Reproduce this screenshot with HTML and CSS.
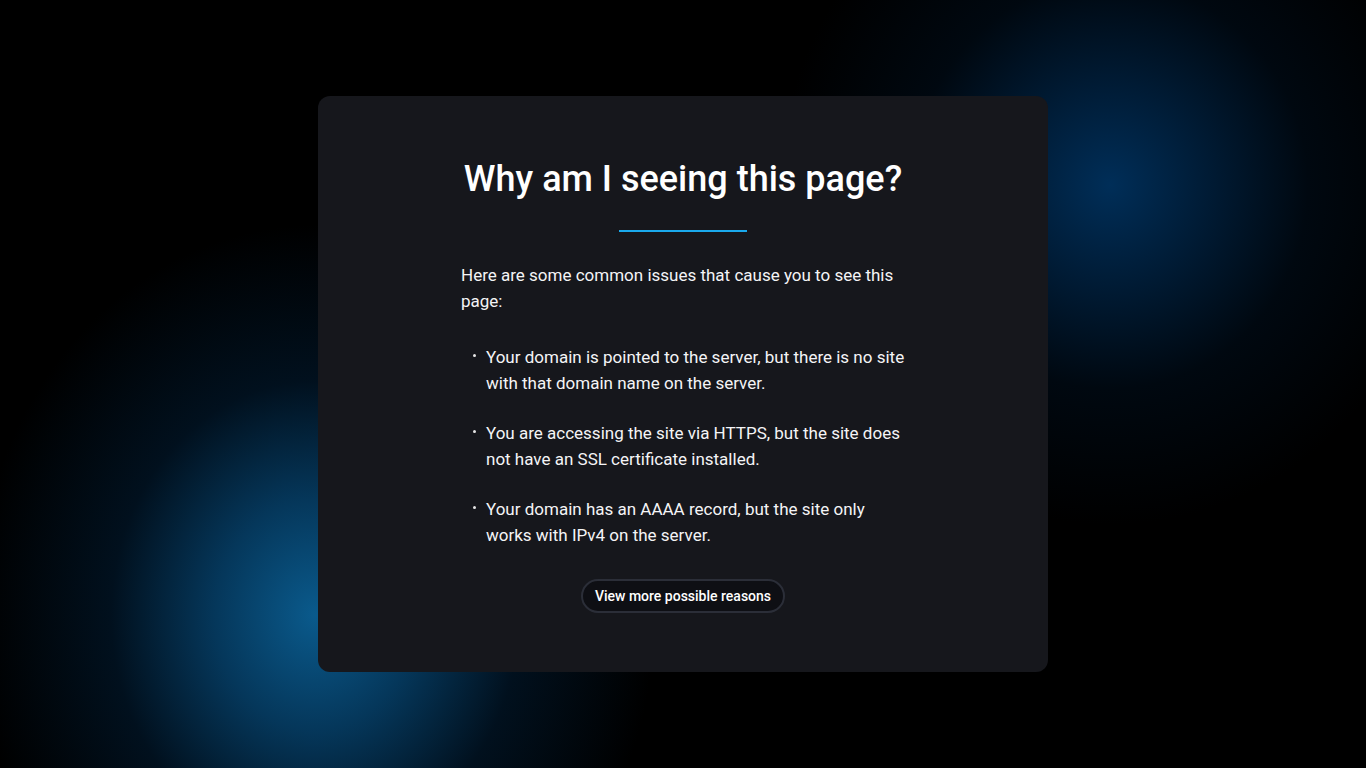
FILE: index.html
```html
<!DOCTYPE html>
<html lang="en">
<head>
<meta charset="utf-8">
<title>Why am I seeing this page?</title>
<link rel="stylesheet" href="styles.css">
</head>
<body>
<main class="stage">
  <section class="card">
    <h1 class="title">Why am I seeing this page?</h1>
    <div class="divider"></div>
    <div class="content">
      <p class="intro">Here are some common issues that cause you to see this page:</p>
      <ul class="reasons">
        <li>Your domain is pointed to the server, but there is no site with that domain name on the server.</li>
        <li>You are accessing the site via HTTPS, but the site does not have an SSL certificate installed.</li>
        <li>Your domain has an AAAA record, but the site only works with IPv4 on the server.</li>
      </ul>
    </div>
    <a class="more" href="#">View more possible reasons</a>
  </section>
</main>
</body>
</html>
```

FILE: styles.css
```css
* { box-sizing: border-box; }
html, body { margin: 0; height: 100%; }
body {
  background-color: #000;
  background-image:
    radial-gradient(ellipse 330px 340px at 1110px 185px, rgba(0, 46, 88, 1) 0%, rgba(0, 36, 70, 0.75) 30%, rgba(0, 20, 40, 0.4) 60%, rgba(0, 0, 0, 0) 100%),
    radial-gradient(ellipse 340px 390px at 315px 615px, rgba(10, 90, 140, 1) 0%, rgba(6, 68, 112, 0.8) 30%, rgba(2, 36, 66, 0.45) 60%, rgba(0, 0, 0, 0) 100%);
  font-family: Roboto, "Liberation Sans", sans-serif;
  color: #fff;
  overflow: hidden;
}
.stage {
  height: 768px;
  display: flex;
  justify-content: center;
  padding-top: 96px;
}
.card {
  width: 730px;
  height: 576px;
  background: #16171c;
  border-radius: 12px;
  padding: 59px 143px 0;
  display: flex;
  flex-direction: column;
  align-items: center;
}
.title {
  margin: 0;
  font-size: 36px;
  font-weight: 500;
  line-height: 48px;
}
.divider {
  width: 128px;
  height: 2px;
  background: #1aa9ec;
  margin-top: 27px;
}
.content {
  width: 444px;
  margin-top: 30px;
  font-size: 17px;
  line-height: 26px;
  color: #f4f4f6;
}
.intro { margin: 0; }
.reasons {
  margin: 30px 0 0;
  padding: 0 0 0 25px;
  list-style: none;
}
.reasons li {
  position: relative;
  margin-bottom: 24px;
}
.reasons li:last-child { margin-bottom: 0; }
.reasons li::before {
  content: "";
  position: absolute;
  left: -13px;
  top: 10px;
  width: 3px;
  height: 3px;
  border-radius: 50%;
  background: #e6e6e6;
}
.more {
  margin-top: 31px;
  display: inline-block;
  height: 34px;
  padding: 0 12px;
  line-height: 30px;
  border: 2px solid #2b2e38;
  border-radius: 17px;
  background: #0e0f14;
  color: #fff;
  text-decoration: none;
  font-size: 14px;
  font-weight: 500;
}
```
